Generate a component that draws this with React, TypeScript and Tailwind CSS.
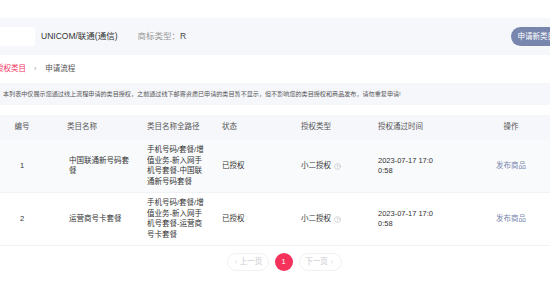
import { CircleHelp, ChevronLeft, ChevronRight } from "lucide-react";

type Row = {
  id: number;
  name: string;
  path: string;
  status: string;
  type: string;
  time: string;
};

const rows: Row[] = [
  {
    id: 1,
    name: "中国联通新号码套餐",
    path: "手机号码/套餐/增值业务-新入网手机号套餐-中国联通新号码套餐",
    status: "已授权",
    type: "小二授权",
    time: "2023-07-17 17:00:58",
  },
  {
    id: 2,
    name: "运营商号卡套餐",
    path: "手机号码/套餐/增值业务-新入网手机号套餐-运营商号卡套餐",
    status: "已授权",
    type: "小二授权",
    time: "2023-07-17 17:00:58",
  },
];

const cols = "grid grid-cols-[67px_80px_75px_79px_77px_94px_1fr] items-center";

export default function App() {
  return (
    <div
      className="w-[550px] h-[286px] overflow-hidden bg-white text-[#333]"
      style={{ fontFamily: '"Liberation Sans", "Noto Sans CJK SC", sans-serif' }}
    >
      <div className="h-[18px]" />
      {/* shop header */}
      <div className="h-[37px] bg-[#f6f7fb] flex items-center">
        <div className="w-[35px] h-[19px] bg-white rounded-r-[3px]" />
        <span className="ml-[6px] text-[8.5px] text-[#333]">UNICOM/联通(通信)</span>
        <span className="ml-[20px] text-[8.5px] text-[#999]">
          商标类型：<span className="text-[#444]">R</span>
        </span>
        <button className="ml-auto mr-[-12px] h-[19px] px-[7px] rounded-full bg-[#7886ad] text-white text-[7.5px] leading-none whitespace-nowrap">
          申请新类目
        </button>
      </div>

      {/* breadcrumb */}
      <div className="h-[28px] flex items-center text-[7.5px] -ml-[4px]">
        <span className="text-[#f2355f]">授权类目</span>
        <span className="ml-[8px] text-[#999] text-[7px]">›</span>
        <span className="ml-[9px] text-[#555]">申请流程</span>
      </div>

      {/* notice */}
      <div className="h-[22px] bg-[#f6f7fb] flex items-center pl-[3px] text-[6.1px] text-[#555] whitespace-nowrap">
        本列表中仅展示您通过线上流程申请的类目授权，之前通过线下邮寄资质已申请的类目暂不显示，但不影响您的类目授权和商品发布，请勿重复申请!
      </div>

      <div className="h-[10px]" />

      {/* table */}
      <div className="text-[7.5px] leading-[10.5px]">
        <div className={`${cols} h-[25px] bg-[#f6f7fb] text-[#555]`}>
          <div className="w-[44px] text-center">编号</div>
          <div>类目名称</div>
          <div>类目名称全路径</div>
          <div>状态</div>
          <div>授权类型</div>
          <div>授权通过时间</div>
          <div className="text-center">操作</div>
        </div>
        {rows.map((row, i) => (
          <div
            key={row.id}
            className={`${cols} h-[53px] border-b border-[#f1f2f6] ${i === 0 ? "bg-[#f9fafc]" : "bg-white"}`}
          >
            <div className="w-[44px] text-center">{row.id}</div>
            <div className="w-[64px] pl-[2px] break-all">{row.name}</div>
            <div className="w-[58px] break-all">{row.path}</div>
            <div>{row.status}</div>
            <div className="flex items-center gap-[3px]">
              {row.type}
              <CircleHelp size={7} strokeWidth={1.5} className="text-[#aaa]" />
            </div>
            <div className="w-[58px] break-all">{row.time}</div>
            <div className="text-center text-[#7886ad]">发布商品</div>
          </div>
        ))}
      </div>

      {/* pagination */}
      <div className="flex justify-center items-center gap-[6px] pl-[18px] mt-[7px] text-[7.5px]">
        <button className="h-[18px] w-[42px] rounded-full border border-[#f1f1f4] text-[#c8c8cc] flex items-center justify-center gap-[1px]">
          <ChevronLeft size={6} strokeWidth={2} />
          上一页
        </button>
        <button className="h-[18px] w-[18px] rounded-full bg-[#f5325c] text-white flex items-center justify-center">
          1
        </button>
        <button className="h-[18px] w-[43px] rounded-full border border-[#f1f1f4] text-[#c8c8cc] flex items-center justify-center gap-[1px]">
          下一页
          <ChevronRight size={6} strokeWidth={2} />
        </button>
      </div>
    </div>
  );
}
